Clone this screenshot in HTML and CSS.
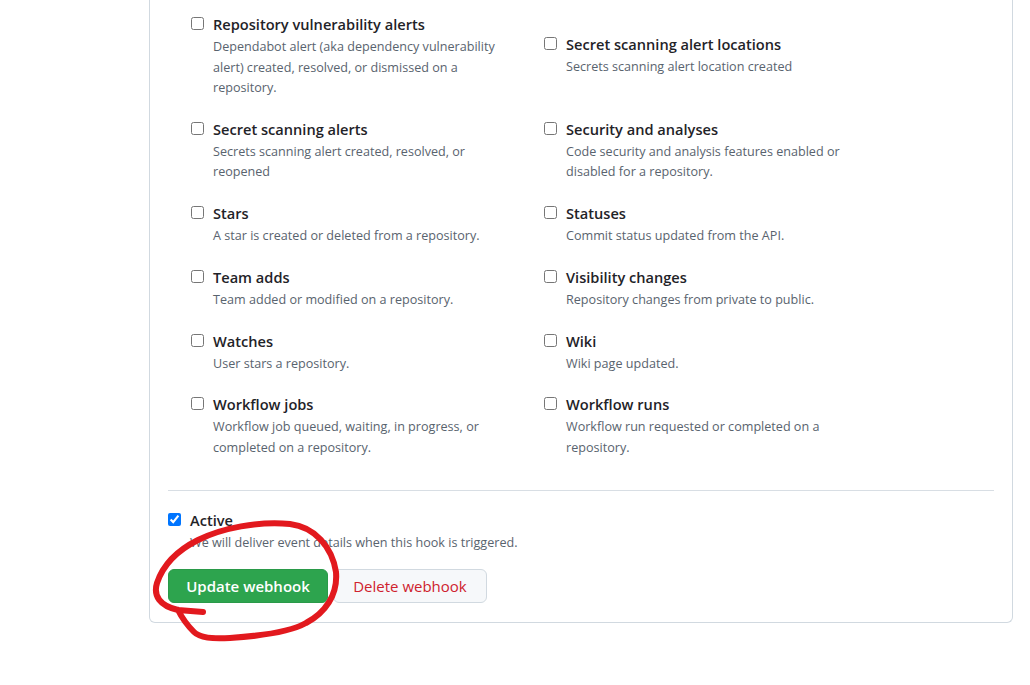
FILE: index.html
```html
<!DOCTYPE html>
<html lang="en">
<head>
<meta charset="utf-8">
<title>Webhook events</title>
<link rel="stylesheet" href="styles.css">
</head>
<body>
<main class="page">
  <section class="card">
    <div class="events">
      <div class="event">
        <input type="checkbox" class="check">
        <div class="event-body">
          <div class="event-title">Repository vulnerability alerts</div>
          <p class="event-note">Dependabot alert (aka dependency vulnerability alert) created, resolved, or dismissed on a repository.</p>
        </div>
      </div>
      <div class="event event-shifted">
        <input type="checkbox" class="check">
        <div class="event-body">
          <div class="event-title">Secret scanning alert locations</div>
          <p class="event-note">Secrets scanning alert location created</p>
        </div>
      </div>
      <div class="event">
        <input type="checkbox" class="check">
        <div class="event-body">
          <div class="event-title">Secret scanning alerts</div>
          <p class="event-note">Secrets scanning alert created, resolved, or reopened</p>
        </div>
      </div>
      <div class="event">
        <input type="checkbox" class="check">
        <div class="event-body">
          <div class="event-title">Security and analyses</div>
          <p class="event-note">Code security and analysis features enabled or disabled for a repository.</p>
        </div>
      </div>
      <div class="event">
        <input type="checkbox" class="check">
        <div class="event-body">
          <div class="event-title">Stars</div>
          <p class="event-note">A star is created or deleted from a repository.</p>
        </div>
      </div>
      <div class="event">
        <input type="checkbox" class="check">
        <div class="event-body">
          <div class="event-title">Statuses</div>
          <p class="event-note">Commit status updated from the API.</p>
        </div>
      </div>
      <div class="event">
        <input type="checkbox" class="check">
        <div class="event-body">
          <div class="event-title">Team adds</div>
          <p class="event-note">Team added or modified on a repository.</p>
        </div>
      </div>
      <div class="event">
        <input type="checkbox" class="check">
        <div class="event-body">
          <div class="event-title">Visibility changes</div>
          <p class="event-note">Repository changes from private to public.</p>
        </div>
      </div>
      <div class="event">
        <input type="checkbox" class="check">
        <div class="event-body">
          <div class="event-title">Watches</div>
          <p class="event-note">User stars a repository.</p>
        </div>
      </div>
      <div class="event">
        <input type="checkbox" class="check">
        <div class="event-body">
          <div class="event-title">Wiki</div>
          <p class="event-note">Wiki page updated.</p>
        </div>
      </div>
      <div class="event">
        <input type="checkbox" class="check">
        <div class="event-body">
          <div class="event-title">Workflow jobs</div>
          <p class="event-note">Workflow job queued, waiting, in progress, or completed on a repository.</p>
        </div>
      </div>
      <div class="event">
        <input type="checkbox" class="check">
        <div class="event-body">
          <div class="event-title">Workflow runs</div>
          <p class="event-note">Workflow run requested or completed on a repository.</p>
        </div>
      </div>
    </div>

    <hr class="divider">

    <div class="event active">
      <input type="checkbox" class="check" checked>
      <div class="event-body active-body">
        <div class="event-title">Active</div>
        <p class="event-note">We will deliver event details when this hook is triggered.</p>
      </div>
    </div>

    <div class="actions">
      <button class="btn btn-primary" type="button">Update webhook</button>
      <button class="btn btn-danger" type="button">Delete webhook</button>
    </div>
  </section>
</main>

<svg class="scribble" width="1030" height="685" viewBox="0 0 1030 685" aria-hidden="true">
  <path d="M203 612 L178 610 C160 606 153 596 157 583 C163 565 178 550 198 540 C222 528 258 521 290 524 C315 527 332 547 336 572 C338 595 325 613 306 623 C290 632 260 636 230 638 C212 639 200 638 194 632 C186 624 181 616 178 610"
        fill="none" stroke="#e2191e" stroke-width="6" stroke-linecap="round" stroke-linejoin="round"/>
</svg>
</body>
</html>
```

FILE: styles.css
```css
html, body {
  margin: 0;
  padding: 0;
  background: #ffffff;
}

body {
  position: relative;
  min-height: 685px;
  font-family: "Open Sans", "Noto Sans", sans-serif;
  color: #1f2328;
}

.page {
  padding-left: 149px;
  width: 864px;
}

.card {
  box-sizing: border-box;
  width: 864px;
  border: 1px solid #d1d9e0;
  border-top: none;
  border-radius: 0 0 6px 6px;
  padding: 13px 18px 19px 18px;
}

.events {
  display: grid;
  grid-template-columns: 353px 353px;
  row-gap: 19.3px;
  margin-left: 23px;
  align-items: start;
}

.event {
  display: flex;
  align-items: flex-start;
  gap: 9px;
}

.event-shifted {
  margin-top: 20px;
}

.check {
  width: 13px;
  height: 13px;
  margin: 4px 0 0 0;
  flex: none;
}

.event-body {
  max-width: 305px;
}

.event-title {
  font-size: 14.6px;
  font-weight: 600;
  line-height: 22px;
  color: #1f2328;
}

.event-note {
  margin: 2px 0 0 0;
  font-size: 12.6px;
  line-height: 20.5px;
  color: #59636e;
}

.divider {
  border: 0;
  border-top: 1px solid #d8dee4;
  margin: 32px 0 18px 0;
}

.active-body {
  max-width: none;
}

.actions {
  display: flex;
  gap: 5px;
  margin-top: 15.5px;
}

.btn {
  font-family: inherit;
  font-size: 15px;
  font-weight: 600;
  height: 34px;
  border-radius: 6px;
  padding: 0 12px;
  cursor: pointer;
}

.btn-primary {
  width: 160px;
  background: #2da44e;
  color: #ffffff;
  border: 1px solid #2a9a49;
}

.btn-danger {
  width: 154px;
  background: #f6f8fa;
  color: #cf222e;
  border: 1px solid #d1d9e0;
  font-weight: 500;
}

.scribble {
  position: absolute;
  top: 0;
  left: 0;
  pointer-events: none;
}
```
